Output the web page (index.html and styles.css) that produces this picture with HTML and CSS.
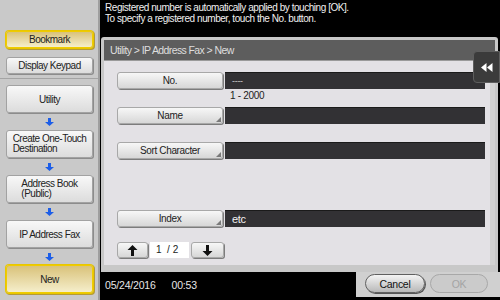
FILE: index.html
```html
<!DOCTYPE html>
<html lang="en">
<head>
    <meta charset="UTF-8">
    <title>IP Address Fax - New</title>
    <link rel="stylesheet" href="styles.css">
</head>
<body>
    <div class="screen">
        <aside class="sidebar">
            <div class="sidebar-top">
                <button class="side-btn active">Bookmark</button>
                <button class="side-btn">Display Keypad</button>
            </div>
            <div class="flow">
                <button class="side-btn tall">Utility</button>
                <span class="flow-arrow"><svg width="9" height="8" viewBox="0 0 9 8"><path d="M3 0h3v4h3L4.5 8 0 4h3z" fill="#1d5ee8"/></svg></span>
                <button class="side-btn tall"><span>Create One-Touch<br>Destination</span></button>
                <span class="flow-arrow"><svg width="9" height="8" viewBox="0 0 9 8"><path d="M3 0h3v4h3L4.5 8 0 4h3z" fill="#1d5ee8"/></svg></span>
                <button class="side-btn tall"><span>Address Book<br>(Public)</span></button>
                <span class="flow-arrow"><svg width="9" height="8" viewBox="0 0 9 8"><path d="M3 0h3v4h3L4.5 8 0 4h3z" fill="#1d5ee8"/></svg></span>
                <button class="side-btn tall">IP Address Fax</button>
                <span class="flow-arrow"><svg width="9" height="8" viewBox="0 0 9 8"><path d="M3 0h3v4h3L4.5 8 0 4h3z" fill="#1d5ee8"/></svg></span>
                <button class="side-btn tall active">New</button>
            </div>
        </aside>

        <main class="main">
            <div class="message">
                Registered number is automatically applied by touching [OK].<br>
                To specify a registered number, touch the No. button.
            </div>

            <div class="panel">
                <div class="panel-head">Utility &gt; IP Address Fax &gt; New</div>
                <div class="panel-body">
                    <div class="content">
                        <div class="row">
                            <button class="key">No.</button>
                            <div class="field muted">----</div>
                        </div>
                        <div class="hint">1 - 2000</div>
                        <div class="row">
                            <button class="key kbd">Name</button>
                            <div class="field"></div>
                        </div>
                        <div class="row row-sort">
                            <button class="key kbd">Sort Character</button>
                            <div class="field"></div>
                        </div>
                        <div class="row row-index">
                            <button class="key kbd">Index</button>
                            <div class="field">etc</div>
                        </div>
                        <div class="pager">
                            <button class="key pager-btn"><svg width="11" height="11" viewBox="0 0 11 11"><path d="M4 11V5H0.5L5.5 0l5 5H7v6z" fill="#111"/></svg></button>
                            <div class="page-no">1 &nbsp;/ 2</div>
                            <button class="key pager-btn next"><svg width="11" height="11" viewBox="0 0 11 11"><path d="M4 0v6H0.5l5 5 5-5H7V0z" fill="#111"/></svg></button>
                        </div>
                    </div>
                    <div class="side-strip"></div>
                </div>
                <button class="collapse-tab"><svg width="12" height="9" viewBox="0 0 12 9"><path d="M0 4.5L5.5 0v9zM6 4.5L11.5 0v9z" fill="#fff"/></svg></button>
            </div>

            <footer class="footer">
                <div class="clock"><span>05/24/2016</span><span>00:53</span></div>
                <div class="actions">
                    <button class="pill">Cancel</button>
                    <button class="pill disabled">OK</button>
                </div>
            </footer>
        </main>
    </div>
</body>
</html>
```

FILE: styles.css
```css
body {
    margin: 0;
    background: #000;
    font-family: "Liberation Sans", Arial, sans-serif;
}
button {
    font-family: inherit;
    cursor: pointer;
}
.screen {
    width: 500px;
    height: 300px;
    display: grid;
    grid-template-columns: 100px 1fr;
    overflow: hidden;
}

/* left column */
.sidebar {
    background: #c9c9c9;
    border-right: 2px solid #9e9e9e;
    box-sizing: border-box;
    display: flex;
    flex-direction: column;
}
.sidebar-top {
    height: 79px;
    box-sizing: border-box;
    padding: 31px 5px 0 6px;
    border-bottom: 1px solid #a4a4a4;
    display: flex;
    flex-direction: column;
    gap: 9px;
}
.side-btn {
    height: 17px;
    padding: 0;
    font-size: 10px;
    letter-spacing: -0.5px;
    color: #222;
    background: linear-gradient(#f8f8f8, #dcdcdc);
    border: 1px solid #a2a2a2;
    border-radius: 3px;
    box-shadow: 1px 1px 0 #8c8c8c;
    display: flex;
    align-items: center;
    justify-content: center;
}
.side-btn span {
    text-align: left;
    line-height: 10px;
}
.side-btn.active {
    background: linear-gradient(#d9c27a, #f5eecb);
    border: 1px solid #f0cc00;
    box-shadow: 0 0 0 1px #e8c600, 1px 1px 0 1px #b39a3a;
}
.flow {
    padding: 6px 5px 0 6px;
    display: flex;
    flex-direction: column;
}
.side-btn.tall {
    height: 28px;
}
.flow-arrow {
    height: 17px;
    display: flex;
    align-items: center;
    justify-content: center;
}

/* right column */
.main {
    display: flex;
    flex-direction: column;
}
.message {
    height: 37px;
    box-sizing: border-box;
    padding: 2px 0 0 5px;
    color: #f0f0f0;
    font-size: 10px;
    letter-spacing: -0.45px;
    line-height: 11px;
}
.panel {
    position: relative;
    height: 235px;
    margin-left: 1px;
    margin-right: 2px;
    box-sizing: border-box;
    background: #c8c8c8;
    border-radius: 3px 3px 0 0;
    padding: 3px 3px 7px 3px;
    display: flex;
    flex-direction: column;
}
.panel-head {
    height: 20px;
    background: #5d5d5d;
    color: #dedede;
    font-size: 10.5px;
    letter-spacing: -0.6px;
    line-height: 20px;
    padding-left: 6px;
    border-bottom: 1px solid #9a9a9a;
}
.panel-body {
    flex: 1;
    display: flex;
}
.content {
    flex: 1;
    background: #e3e1e5;
    padding: 11px 5px 0 13px;
    display: flex;
    flex-direction: column;
}
.side-strip {
    width: 5px;
    background: #d2d2d2;
}
.row {
    display: flex;
    height: 17px;
    gap: 1px;
}
.row-sort { margin-top: 18px; }
.row-index { margin-top: 51px; }
.key {
    position: relative;
    width: 106px;
    height: 17px;
    padding: 0;
    font-size: 10px;
    letter-spacing: -0.35px;
    color: #222;
    background: linear-gradient(#f7f7f7, #d7d7d7);
    border: 1px solid #a8a8a8;
    border-radius: 3px;
    box-shadow: 1px 1px 0 #7c7c7c;
}
.key.kbd::after {
    content: '';
    position: absolute;
    right: 1px;
    bottom: 1px;
    border-style: solid;
    border-width: 0 0 5px 5px;
    border-color: transparent transparent #7a7a7a transparent;
}
.field {
    flex: 1;
    background: #323134;
    border-top: 1px solid #1a1a1a;
    color: #f2f2f2;
    font-size: 11px;
    letter-spacing: -0.3px;
    line-height: 16px;
    padding-left: 7px;
    margin-left: 1px;
}
.field.muted {
    color: #cfcfcf;
    font-size: 9px;
}
.hint {
    height: 18px;
    padding-left: 113px;
    font-size: 10px;
    letter-spacing: -0.3px;
    line-height: 13px;
    color: #222;
}
.pager {
    margin-top: 15px;
    display: flex;
    gap: 2px;
    height: 16px;
}
.pager-btn {
    width: 31px;
    height: 16px;
    display: flex;
    align-items: center;
    justify-content: center;
}
.pager-btn.next {
    width: 33px;
}
.page-no {
    width: 39px;
    background: #fff;
    font-size: 10px;
    line-height: 16px;
    padding-left: 6px;
    box-sizing: border-box;
    color: #222;
}
.collapse-tab {
    position: absolute;
    top: 14px;
    right: -2px;
    width: 27px;
    height: 32px;
    padding: 0;
    background: #3b3b3b;
    border: 1px solid #5e5e5e;
    border-radius: 4px 0 0 4px;
    display: flex;
    align-items: center;
    justify-content: center;
}

/* bottom bar */
.footer {
    flex: 1;
    display: flex;
    justify-content: space-between;
}
.clock {
    display: flex;
    gap: 16px;
    padding: 7px 0 0 5px;
    color: #e6e6e6;
    font-size: 10.5px;
    letter-spacing: -0.2px;
}
.actions {
    width: 144px;
    height: 25px;
    box-sizing: border-box;
    background: #d0d0d0;
    padding: 2px 10px 0 9px;
    display: flex;
    gap: 5px;
}
.pill {
    height: 19px;
    padding: 0;
    border-radius: 10px;
    font-size: 10.5px;
    letter-spacing: -0.3px;
    color: #111;
    width: 60px;
    background: linear-gradient(#f4f4f4, #b8b8b8);
    border: 1px solid #606060;
    box-shadow: 1px 1px 0 #555;
}
.pill.disabled {
    width: 58px;
    color: #a4a4a4;
    background: #cbcbcb;
    border: 1px solid #a8a8a8;
    box-shadow: none;
}
```
